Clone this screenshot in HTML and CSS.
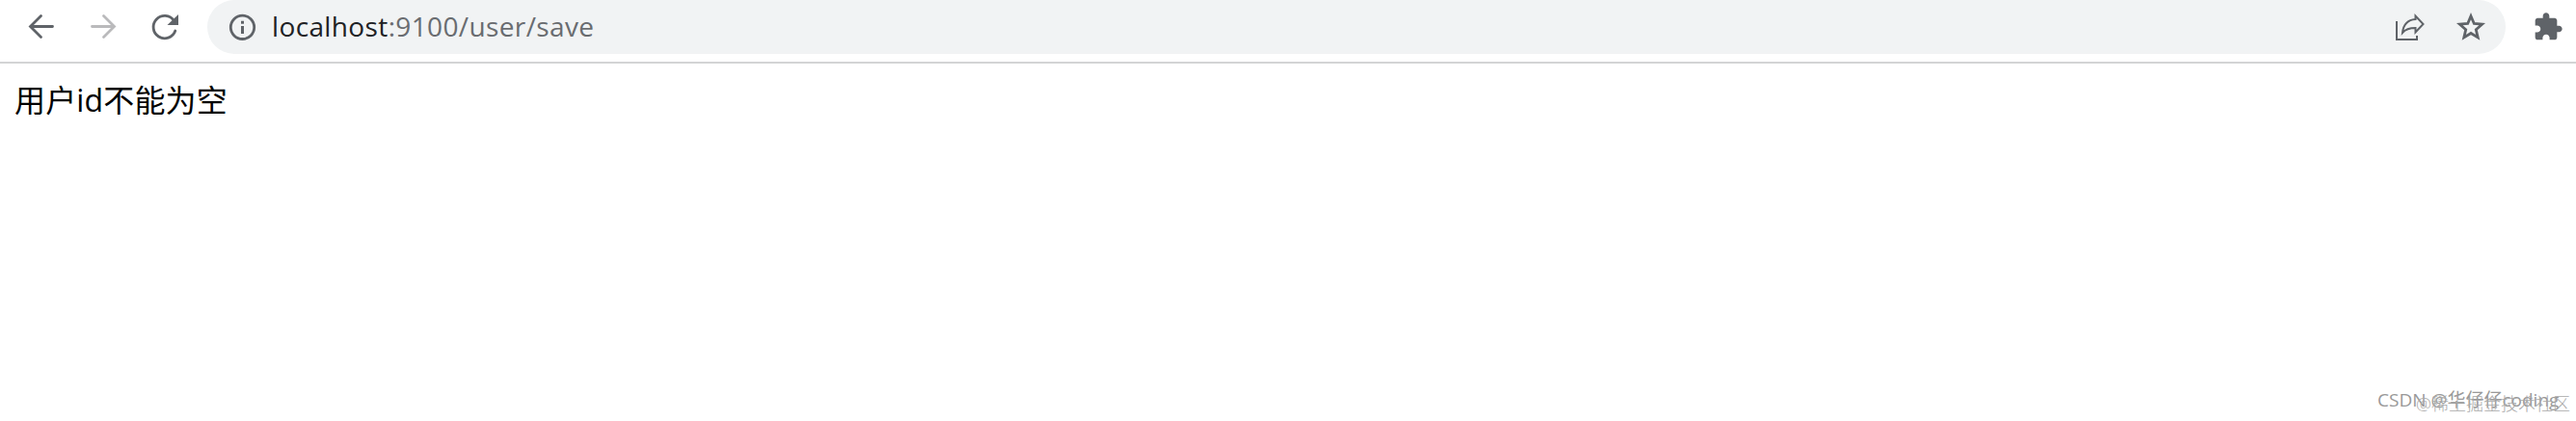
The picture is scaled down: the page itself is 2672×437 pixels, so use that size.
FILE: index.html
```
<!DOCTYPE html>
<html lang="zh-CN">
<head>
    <meta charset="UTF-8">
    <meta name="viewport" content="width=device-width, initial-scale=1.0">
    <title>localhost:9100/user/save</title>
    <link rel="stylesheet" href="styles.css">
</head>
<body>

    <div class="toolbar">
        <div class="nav">
            <svg class="icon" viewBox="0 0 40 40">
                <path class="line" d="M33.500 19.500H11M21.500 8.500L10.500 19.500L21.500 30.500"/>
            </svg>
            <svg class="icon disabled" viewBox="0 0 40 40">
                <path class="line" d="M10.500 19.500H33M22.500 8.500L33.500 19.500L22.500 30.500"/>
            </svg>
            <svg class="icon" viewBox="0 0 40 40">
                <path class="line" d="M31.500 13.500A11.700 11.700 0 1 0 32.800 24"/>
                <path class="solid" d="M36 7V18H24.500Z"/>
            </svg>
        </div>

        <div class="address">
            <svg class="icon info" viewBox="0 0 40 40">
                <circle class="line" cx="20.500" cy="20.300" r="12.200"/>
                <path class="solid" d="M19 13.800h3v3h-3zM19 19h3v8h-3z"/>
            </svg>
            <div class="url"><span class="host">localhost</span>:9100/user/save</div>
            <svg class="icon share" viewBox="0 0 40 40">
                <path class="thin" d="M7 14V33H28V29"/>
                <path class="thin" d="M13 26C14 17 19 12.500 26.500 12V8.500L34.500 17L26.500 25.500V21C20 21 16 22.500 13 26Z"/>
            </svg>
            <svg class="icon star" viewBox="0 0 40 40">
                <path class="thin-star" d="M20 8.700L23.300 16.500L31.600 17.200L25.300 22.700L27.200 30.900L20 26.500L12.800 30.900L14.700 22.700L8.400 17.200L16.700 16.500Z"/>
            </svg>
        </div>

        <svg class="icon puzzle" viewBox="0 0 24 24">
            <path class="solid" d="M20.500 11H19V7c0-1.100-.9-2-2-2h-4V3.500C13 2.120 11.880 1 10.500 1S8 2.120 8 3.500V5H4c-1.100 0-1.990.9-1.990 2v3.800H3.500c1.490 0 2.700 1.210 2.700 2.700s-1.210 2.700-2.700 2.700H2V20c0 1.100.9 2 2 2h3.800v-1.500c0-1.490 1.210-2.700 2.700-2.700 1.490 0 2.700 1.210 2.700 2.700V22H17c1.100 0 2-.9 2-2v-4h1.500c1.380 0 2.500-1.120 2.500-2.500S21.880 11 20.500 11z"/>
        </svg>
    </div>

    <div class="content">用户id不能为空</div>

    <div class="watermark csdn">CSDN @华仔仔coding</div>
    <div class="watermark juejin">@稀土掘金技术社区</div>

</body>
</html>
```
FILE: styles.css
```
/* Global Styles */
body {
    margin: 0;
    height: 437px;
    overflow: hidden;
    background-color: white;
    font-family: "Open Sans", "Noto Sans CJK SC", sans-serif;
}

/* Browser Toolbar */
.toolbar {
    display: flex;
    height: 64px;
    border-bottom: 2px solid #d3d4d5;
}

.nav {
    display: flex;
    gap: 24px;
    padding: 8px 0 0 21px;
    width: 194px;
}

/* Address Bar */
.address {
    display: flex;
    align-items: center;
    box-sizing: border-box;
    width: 2384px;
    height: 56px;
    padding-left: 16px;
    background-color: #f1f3f4;
    border-radius: 28px;
}

.url {
    flex: 1;
    margin-left: 11px;
    font-size: 28px;
    letter-spacing: 0.37px;
    line-height: 54px;
    padding-bottom: 2px;
    color: #696c70;
    white-space: nowrap;
}

.host {
    color: #202124;
}

/* Icons */
.icon {
    flex: none;
    width: 40px;
    height: 40px;
    color: #5f6368;
}

.nav .disabled {
    color: #bababc;
}

.share {
    margin-right: 24px;
}

.star {
    margin-right: 16px;
}

.puzzle {
    width: 32px;
    height: 32px;
    margin: 12px 0 0 28px;
}

.line {
    fill: none;
    stroke: currentColor;
    stroke-width: 2.8;
    stroke-linecap: round;
}

.thin,
.thin-star {
    fill: none;
    stroke: currentColor;
    stroke-width: 2;
}

.thin-star {
    stroke-width: 2.8;
}

.solid {
    fill: currentColor;
}

/* Page Content */
.content {
    padding: 14px 15px;
    font-size: 32px;
    letter-spacing: 0.15px;
    line-height: 48px;
    color: black;
}

/* Watermarks */
.watermark {
    position: absolute;
    white-space: nowrap;
    color: #999;
    line-height: 24px;
}

.csdn {
    left: 2466px;
    top: 403px;
    font-size: 19px;
}

.juejin {
    right: 6px;
    top: 407px;
    font-size: 18px;
    font-weight: 300;
    color: #aaa;
}
```
